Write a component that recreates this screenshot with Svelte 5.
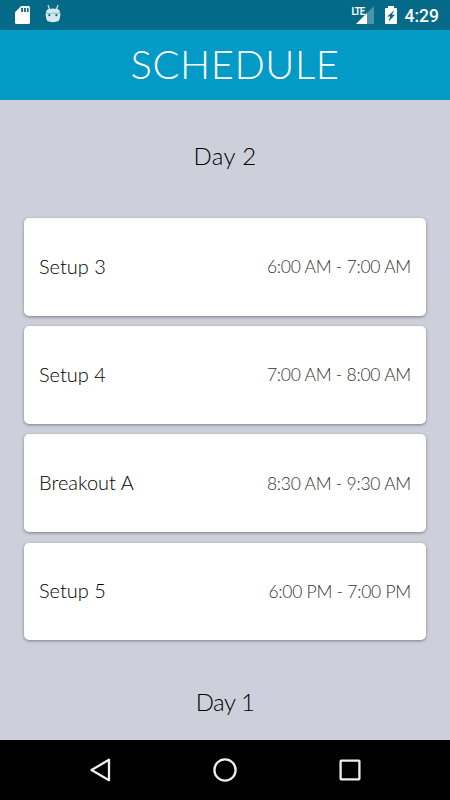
<script>
    const days = [
        {
            name: 'Day 2',
            events: [
                { title: 'Setup 3', time: '6:00 AM - 7:00 AM' },
                { title: 'Setup 4', time: '7:00 AM - 8:00 AM' },
                { title: 'Breakout A', time: '8:30 AM - 9:30 AM' },
                { title: 'Setup 5', time: '6:00 PM - 7:00 PM' }
            ]
        },
        { name: 'Day 1', events: [] }
    ];
</script>

<div class="screen">
    <div class="status">
        <svg class="sd" width="16" height="20" viewBox="0 0 16 20">
            <path d="M6.2 1H13.5Q15 1 15 2.5V17.5Q15 19 13.5 19H1.5Q0 19 0 17.5V7.2Z" fill="#fff" />
            <path d="M6.2 3H8V7H6.2ZM9.1 3H10.9V7H9.1ZM12 3H13.6V7H12Z" fill="#046a88" />
        </svg>
        <svg class="droid" width="16" height="20" viewBox="0 0 16 20">
            <path d="M3 0L4.8 5M13 0L11.2 5" stroke="#d5e8ed" stroke-width="1.2" fill="none" />
            <path d="M1 8.2Q1 4.6 3.8 4Q8 2.8 12.2 4Q15 4.6 15 8.2Z" fill="#d5e8ed" />
            <path d="M.5 8.2H15.5L14.8 13.5Q14.4 16 12 16.6Q8 17.8 4 16.6Q1.6 16 1.2 13.5Z" fill="#d5e8ed" />
            <path d="M.8 8H15.2" stroke="#8ebac8" stroke-width=".6" />
            <circle cx="4.3" cy="10.2" r="1.1" fill="#046a88" />
            <circle cx="11.4" cy="10.2" r="1.1" fill="#046a88" />
        </svg>
        <span class="spacer"></span>
        <div class="signal">
            <span class="lte">LTE</span>
            <svg width="18" height="18" viewBox="0 0 18 18">
                <path d="M18 0V18H0Z" fill="#4a93aa" />
                <path d="M11 7V18H0Z" fill="#fff" />
            </svg>
        </div>
        <svg class="battery" width="12" height="18" viewBox="0 0 12 18">
            <path d="M3 0H9V2H11Q12 2 12 3V17Q12 18 11 18H1Q0 18 0 17V3Q0 2 1 2H3Z" fill="#fff" />
            <path d="M9.3 4.3L2.2 10.6H5.2L3.5 15.8L10 8.8H7Z" fill="#046a88" />
        </svg>
        <span class="clock">4:29</span>
    </div>

    <header>
        <h1>SCHEDULE</h1>
    </header>

    <main>
        {#each days as day}
            <section>
                <h2>{day.name}</h2>
                {#each day.events as event}
                    <div class="card">
                        <span class="title">{event.title}</span>
                        <span class="time">{event.time}</span>
                    </div>
                {/each}
            </section>
        {/each}
    </main>

    <nav>
        <svg width="24" height="26" viewBox="0 0 24 26">
            <path d="M21 2.8V23.2L3.5 13Z" />
        </svg>
        <svg width="24" height="26" viewBox="0 0 24 26">
            <circle cx="12" cy="13" r="10.6" />
        </svg>
        <svg width="24" height="26" viewBox="0 0 24 26">
            <rect x="2.6" y="3.6" width="18.8" height="18.8" rx=".6" />
        </svg>
    </nav>
</div>

<style>
    :global(body) {
        margin: 0;
    }

    .screen {
        display: flex;
        flex-direction: column;
        width: 450px;
        height: 800px;
        overflow: hidden;
        background: #cdcfda;
        font-family: Lato, "Open Sans", sans-serif;
        font-weight: 300;
        color: #000;
    }

    .status {
        display: flex;
        flex: none;
        box-sizing: border-box;
        height: 30px;
        padding: 5px 11px 0 15px;
        background: #046a88;
        color: #fff;
    }

    .droid {
        margin-left: 14px;
    }

    .spacer {
        flex: 1;
    }

    .signal {
        display: flex;
        align-items: flex-start;
        padding-top: 1px;
    }

    .lte {
        width: 4px;
        font: 600 9.5px/9px Roboto, sans-serif;
        letter-spacing: -0.8px;
        white-space: nowrap;
        transform: scaleY(1.15);
    }

    .battery {
        margin: 1px 8px 0 11px;
    }

    .clock {
        font: 500 17.5px/22px Roboto, sans-serif;
    }

    header {
        flex: none;
        box-sizing: border-box;
        height: 70px;
        padding-left: 20px;
        background: #039bc6;
        color: #fff;
        text-align: center;
    }

    h1 {
        margin: 0;
        font-size: 40px;
        font-weight: 300;
        line-height: 68px;
        letter-spacing: 0.5px;
    }

    main {
        flex: 1;
        min-height: 0;
        overflow: hidden;
        padding: 0 24px;
    }

    h2 {
        margin: 0;
        padding: 41px 0 47px;
        font-size: 24px;
        font-weight: 300;
        line-height: 30px;
        letter-spacing: 0.4px;
        text-align: center;
    }

    section + section h2 {
        padding-top: 36px;
        letter-spacing: -0.5px;
    }

    .card {
        display: flex;
        align-items: center;
        justify-content: space-between;
        box-sizing: border-box;
        height: 97.6px;
        margin-bottom: 10.6px;
        padding: 0 15px 2px;
        border-radius: 5px;
        background: #fff;
        box-shadow: 0 1px 3px rgba(40, 45, 65, 0.5);
    }

    .title {
        font-size: 20px;
    }

    .time {
        padding-top: 2px;
        font-size: 17.5px;
        letter-spacing: -0.25px;
        color: #333;
    }

    nav {
        display: flex;
        flex: none;
        align-items: center;
        justify-content: space-between;
        box-sizing: border-box;
        height: 60px;
        padding: 0 88px;
        background: #000;
    }

    nav svg {
        fill: none;
        stroke: #eee;
        stroke-width: 2.3;
        stroke-linejoin: round;
    }
</style>
